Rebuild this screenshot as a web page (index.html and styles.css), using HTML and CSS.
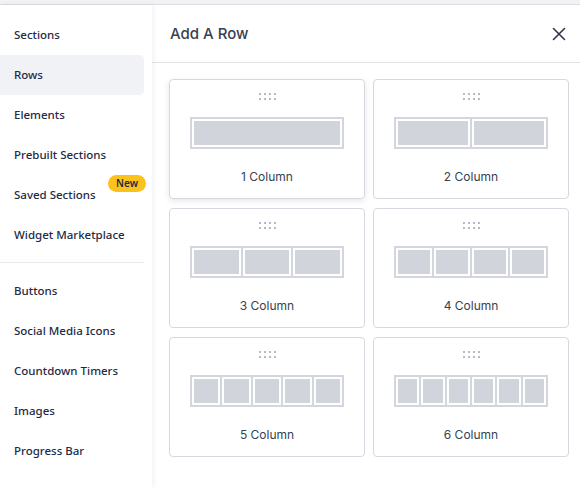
FILE: index.html
```html
<!doctype html>
<html lang="en">
    <head>
        <meta charset="UTF-8" />
        <meta name="viewport" content="width=device-width, initial-scale=1.0" />
        <title>Add A Row</title>
        <link rel="stylesheet" href="styles.css">
    </head>
    <body>
        <div class="topbar"></div>
        <div class="layout">
            <nav class="sidebar">
                <div class="nav-item">Sections</div>
                <div class="nav-item active">Rows</div>
                <div class="nav-item">Elements</div>
                <div class="nav-item">Prebuilt Sections</div>
                <div class="nav-item">Saved Sections <span class="badge">New</span></div>
                <div class="nav-item">Widget Marketplace</div>
                <div class="divider"></div>
                <div class="nav-item">Buttons</div>
                <div class="nav-item">Social Media Icons</div>
                <div class="nav-item">Countdown Timers</div>
                <div class="nav-item">Images</div>
                <div class="nav-item">Progress Bar</div>
            </nav>

            <main class="panel">
                <div class="panel-header">
                    <div class="panel-title">Add A Row</div>
                    <svg class="close" width="14" height="14" viewBox="0 0 14 14">
                        <path d="M1.5 1.5 L12.5 12.5 M12.5 1.5 L1.5 12.5" stroke="#2d3748" stroke-width="1.6" stroke-linecap="round" />
                    </svg>
                </div>

                <div class="row-grid">
                    <div class="row-card hover">
                        <div class="grip"><i></i><i></i><i></i><i></i><i></i><i></i><i></i><i></i></div>
                        <div class="preview"><span></span></div>
                        <div class="label">1 Column</div>
                    </div>
                    <div class="row-card">
                        <div class="grip"><i></i><i></i><i></i><i></i><i></i><i></i><i></i><i></i></div>
                        <div class="preview"><span></span><span></span></div>
                        <div class="label">2 Column</div>
                    </div>
                    <div class="row-card">
                        <div class="grip"><i></i><i></i><i></i><i></i><i></i><i></i><i></i><i></i></div>
                        <div class="preview"><span></span><span></span><span></span></div>
                        <div class="label">3 Column</div>
                    </div>
                    <div class="row-card">
                        <div class="grip"><i></i><i></i><i></i><i></i><i></i><i></i><i></i><i></i></div>
                        <div class="preview"><span></span><span></span><span></span><span></span></div>
                        <div class="label">4 Column</div>
                    </div>
                    <div class="row-card">
                        <div class="grip"><i></i><i></i><i></i><i></i><i></i><i></i><i></i><i></i></div>
                        <div class="preview"><span></span><span></span><span></span><span></span><span></span></div>
                        <div class="label">5 Column</div>
                    </div>
                    <div class="row-card">
                        <div class="grip"><i></i><i></i><i></i><i></i><i></i><i></i><i></i><i></i></div>
                        <div class="preview"><span></span><span></span><span></span><span></span><span></span><span></span></div>
                        <div class="label">6 Column</div>
                    </div>
                </div>
            </main>
        </div>
    </body>
</html>
```

FILE: styles.css
```css
body {
    margin: 0;
    font-family: "Noto Sans", "Open Sans", sans-serif;
    background: #ffffff;
    color: #1f2a44;
    overflow: hidden;
}
.topbar {
    height: 4px;
    background: #f1f2f4;
    border-bottom: 1px solid #dcdde0;
}
.layout {
    display: flex;
    height: 483px;
}
.sidebar {
    width: 144px;
    padding: 10px 8px 0 0;
    background: #ffffff;
    position: relative;
    z-index: 1;
    box-shadow: 2px 0 5px rgba(0, 0, 0, 0.05);
}
.nav-item {
    position: relative;
    height: 40px;
    line-height: 40px;
    padding-left: 14px;
    font-size: 11.5px;
    font-weight: 500;
    color: #1f2a44;
    white-space: nowrap;
}
.nav-item.active {
    background: #f1f2f6;
    border-radius: 0 5px 5px 0;
}
.badge {
    position: absolute;
    top: 0;
    right: -2px;
    height: 17px;
    line-height: 17px;
    padding: 0 8px;
    border-radius: 9px;
    background: #fbc21b;
    color: #1f2a44;
    font-size: 10px;
    font-weight: 600;
}
.divider {
    height: 1px;
    background: #e8e9ec;
    margin: 7px 0 8px;
}
.panel {
    flex: 1;
    background: #ffffff;
}
.panel-header {
    display: flex;
    align-items: center;
    justify-content: space-between;
    height: 57px;
    padding: 0 14px 0 18px;
    border-bottom: 1px solid #e2e3e8;
}
.panel-title {
    font-family: "Inter", sans-serif;
    font-size: 15px;
    font-weight: 500;
    color: #374151;
}
.close {
    display: block;
}
.row-grid {
    display: grid;
    grid-template-columns: 196px 196px;
    grid-auto-rows: 120px;
    column-gap: 8px;
    row-gap: 9px;
    padding: 16px 0 0 17px;
}
.row-card {
    border: 1px solid #d5d8de;
    border-radius: 4px;
    display: flex;
    flex-direction: column;
    align-items: center;
    padding-top: 13px;
    box-sizing: border-box;
}
.row-card.hover {
    box-shadow: 0 2px 6px rgba(0, 0, 0, 0.1);
}
.grip {
    display: grid;
    grid-template-columns: repeat(4, 2px);
    gap: 3px 3px;
    width: 17px;
    height: 7px;
}
.grip i {
    width: 2px;
    height: 2px;
    border-radius: 50%;
    background: #9ea3ad;
}
.preview {
    display: flex;
    gap: 2px;
    width: 154px;
    height: 32px;
    margin-top: 17px;
    box-sizing: border-box;
    border: 2px solid #d3d6dd;
    background: #d3d6dd;
}
.preview span {
    flex: 1;
    border: 2px solid #ffffff;
    background: #d1d5db;
}
.label {
    margin-top: 20px;
    font-family: "Inter", sans-serif;
    font-size: 12px;
    color: #374151;
}
```
